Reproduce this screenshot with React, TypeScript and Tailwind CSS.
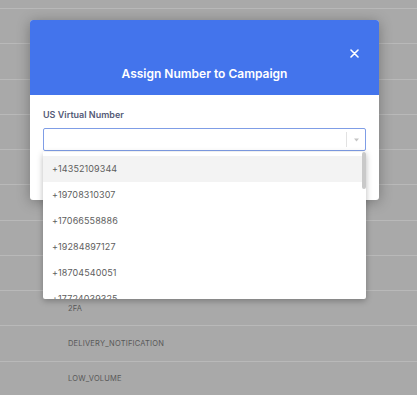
const rows = ["", "", "", "", "", "", "", "", "2FA", "DELIVERY_NOTIFICATION", "LOW_VOLUME"];

const numbers = [
  "+14352109344",
  "+19708310307",
  "+17066558886",
  "+19284897127",
  "+18704540051",
  "+17724039325",
];

const App = () => {
  return (
    <div className="relative h-[395px] w-[417px] overflow-hidden bg-[#a9a9a9] font-['Inter',sans-serif]">
      {/* table behind the overlay */}
      <div className="flex flex-col pt-[8px]">
        {rows.map((label, i) => (
          <div
            key={i}
            className="flex h-[35.25px] shrink-0 items-center border-t border-[#b9b9b9] pl-[68px] text-[7.5px] tracking-[0.2px] text-[#585858]"
          >
            {label}
          </div>
        ))}
      </div>

      {/* modal */}
      <div className="absolute left-[30px] top-[20px] w-[349px] rounded-[3px] bg-white shadow-[0_2px_14px_rgba(0,0,0,0.3)]">
        <div className="relative flex h-[75px] items-end justify-center rounded-t-[3px] bg-[#4374ec] pb-[12px]">
          <p className="text-[12px] font-semibold text-white">Assign Number to Campaign</p>
          <svg
            className="absolute right-[20px] top-[29px]"
            width="9"
            height="9"
            viewBox="0 0 9 9"
            fill="none"
            stroke="white"
            strokeWidth="1.6"
            strokeLinecap="round"
          >
            <path d="M1 1L8 8M8 1L1 8" />
          </svg>
        </div>

        <div className="px-[13px] pb-[49px] pt-[14px]">
          <p className="mb-[7px] text-[9px] font-semibold leading-[12px] text-[#555b78]">US Virtual Number</p>

          <div className="relative">
            <div className="flex h-[23px] items-center rounded-[2px] border border-[#7f9de6] bg-white">
              <div className="flex-1" />
              <div className="h-[15px] w-px bg-[#e2e2e2]" />
              <div className="flex w-[18px] items-center justify-center">
                <svg width="5" height="4" viewBox="0 0 5 4" fill="#c4c4c4">
                  <path d="M0 0.5H5L2.5 3.5Z" />
                </svg>
              </div>
            </div>

            {/* dropdown menu */}
            <div className="absolute left-0 top-full mt-px h-[147px] w-[323px] overflow-hidden rounded-b-[2px] bg-white shadow-[0_2px_6px_rgba(0,0,0,0.28)]">
              <div className="flex flex-col pt-[4px]">
                {numbers.map((n, i) => (
                  <div
                    key={n}
                    className={`flex h-[26px] shrink-0 items-center pl-[9px] text-[9px] tracking-[0.1px] text-[#5e5e5e] ${i === 0 ? "bg-[#f3f3f3]" : ""}`}
                  >
                    {n}
                  </div>
                ))}
              </div>
              <div className="absolute right-0 top-0 h-[37px] w-[4px] rounded-[2px] bg-[#c9c9c9]" />
            </div>
          </div>
        </div>
      </div>
    </div>
  );
};

export default App;
